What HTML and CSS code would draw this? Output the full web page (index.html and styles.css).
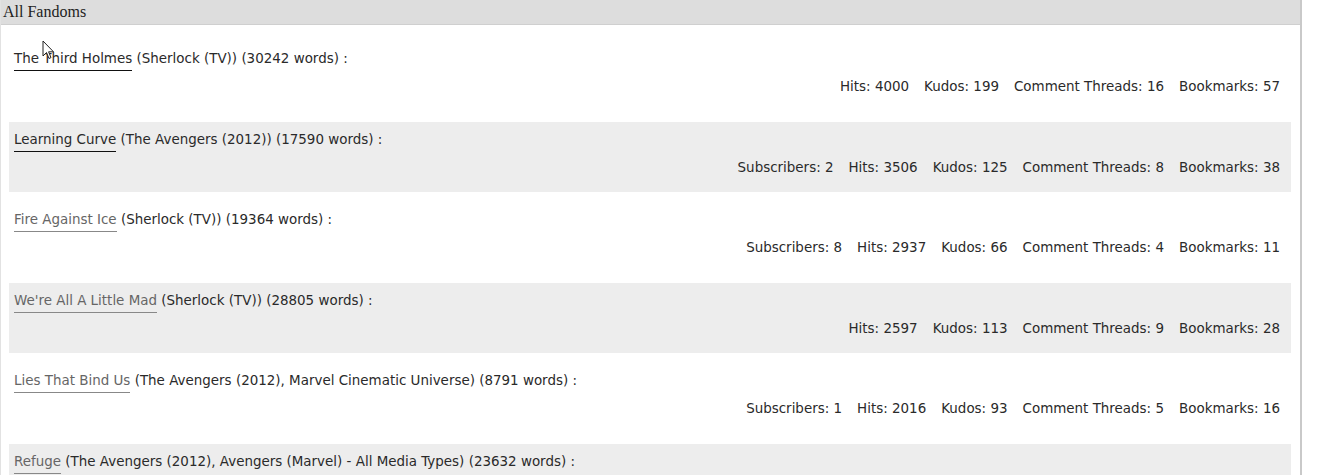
FILE: index.html
```html
<!DOCTYPE html>
<html lang="en">
<head>
  <meta charset="UTF-8" />
  <title>Statistics</title>
  <link rel="stylesheet" href="styles.css">
</head>
<body>

  <div class="fandom-box">
    <h3 class="fandom-heading">All Fandoms</h3>

    <ul class="work-list">
      <li class="work">
        <div class="work-title"><a href="#" class="seen">The Third Holmes</a> (Sherlock (TV)) (30242 words) :</div>
        <dl class="stats">
          <div><dt>Hits:</dt> <dd>4000</dd></div>
          <div><dt>Kudos:</dt> <dd>199</dd></div>
          <div><dt>Comment Threads:</dt> <dd>16</dd></div>
          <div><dt>Bookmarks:</dt> <dd>57</dd></div>
        </dl>
      </li>
      <li class="work">
        <div class="work-title"><a href="#" class="seen">Learning Curve</a> (The Avengers (2012)) (17590 words) :</div>
        <dl class="stats">
          <div><dt>Subscribers:</dt> <dd>2</dd></div>
          <div><dt>Hits:</dt> <dd>3506</dd></div>
          <div><dt>Kudos:</dt> <dd>125</dd></div>
          <div><dt>Comment Threads:</dt> <dd>8</dd></div>
          <div><dt>Bookmarks:</dt> <dd>38</dd></div>
        </dl>
      </li>
      <li class="work">
        <div class="work-title"><a href="#">Fire Against Ice</a> (Sherlock (TV)) (19364 words) :</div>
        <dl class="stats">
          <div><dt>Subscribers:</dt> <dd>8</dd></div>
          <div><dt>Hits:</dt> <dd>2937</dd></div>
          <div><dt>Kudos:</dt> <dd>66</dd></div>
          <div><dt>Comment Threads:</dt> <dd>4</dd></div>
          <div><dt>Bookmarks:</dt> <dd>11</dd></div>
        </dl>
      </li>
      <li class="work">
        <div class="work-title"><a href="#">We're All A Little Mad</a> (Sherlock (TV)) (28805 words) :</div>
        <dl class="stats">
          <div><dt>Hits:</dt> <dd>2597</dd></div>
          <div><dt>Kudos:</dt> <dd>113</dd></div>
          <div><dt>Comment Threads:</dt> <dd>9</dd></div>
          <div><dt>Bookmarks:</dt> <dd>28</dd></div>
        </dl>
      </li>
      <li class="work">
        <div class="work-title"><a href="#">Lies That Bind Us</a> (The Avengers (2012), Marvel Cinematic Universe) (8791 words) :</div>
        <dl class="stats">
          <div><dt>Subscribers:</dt> <dd>1</dd></div>
          <div><dt>Hits:</dt> <dd>2016</dd></div>
          <div><dt>Kudos:</dt> <dd>93</dd></div>
          <div><dt>Comment Threads:</dt> <dd>5</dd></div>
          <div><dt>Bookmarks:</dt> <dd>16</dd></div>
        </dl>
      </li>
      <li class="work">
        <div class="work-title"><a href="#">Refuge</a> (The Avengers (2012), Avengers (Marvel) - All Media Types) (23632 words) :</div>
      </li>
    </ul>
  </div>

  <svg class="cursor" width="13" height="20" viewBox="0 0 13 20">
    <path d="M1 1 L1 16 L4.5 12.5 L7 18.5 L9 17.6 L6.6 11.8 L11.5 11.8 Z" fill="#fff" stroke="#222" stroke-width="1" />
  </svg>

</body>
</html>
```

FILE: styles.css
```css
body {
  margin: 0;
  background: #fff;
  color: #2a2a2a;
  font-family: "DejaVu Sans", sans-serif;
  font-size: 13.45px;
}
.fandom-box {
  width: 1302px;
  height: 475px;
  overflow: hidden;
  border-left: 1px solid #e2e2e2;
  border-right: 2px solid #c9c9c9;
  box-sizing: border-box;
}
.fandom-heading {
  margin: 0;
  height: 25px;
  line-height: 23px;
  padding-left: 2px;
  background: #dddddd;
  border-bottom: 1px solid #cfcfcf;
  box-sizing: border-box;
  font-family: "Liberation Serif", serif;
  font-weight: normal;
  font-size: 16px;
  color: #222;
}
.work-list {
  list-style: none;
  margin: 16px 9px 0 8px;
  padding: 0;
}
.work {
  height: 70px;
  margin-bottom: 10.5px;
  padding: 8px 11px 0 5px;
  box-sizing: border-box;
}
.work:nth-child(even) {
  background: #ededed;
}
.work-title {
  line-height: 20px;
}
.work-title a {
  color: #666;
  text-decoration: none;
  border-bottom: 1px solid #888;
  padding-bottom: 4px;
}
.work-title a.seen {
  color: #2a2a2a;
  border-bottom-color: #111;
}
.stats {
  display: flex;
  justify-content: flex-end;
  gap: 15px;
  margin: 8px 0 0;
  line-height: 20px;
}
.stats dt,
.stats dd {
  display: inline;
  margin: 0;
}
.cursor {
  position: absolute;
  left: 42px;
  top: 40px;
}
```
